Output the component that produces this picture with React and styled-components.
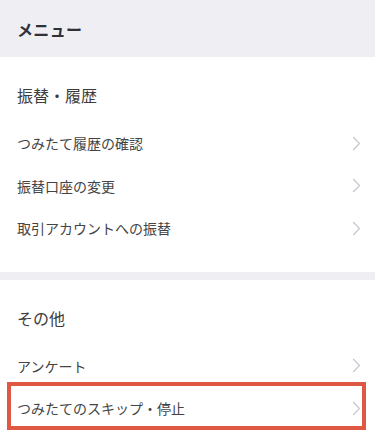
import styled, { createGlobalStyle } from "styled-components"

const GlobalStyle = createGlobalStyle`
    * {
        box-sizing: border-box;
    }

    body {
        margin: 0;
        background: #eeeef3;
        font-family: "Noto Sans CJK JP", "Noto Sans", sans-serif;
        color: #333;
    }
`

const ScHeader = styled.header`
    height: 57px;
    display: flex;
    align-items: center;
    padding: 0 17px;
    background: #eeeef3;
    font-size: 16px;
    font-weight: 700;
    color: #2f3038;
    letter-spacing: .02em;
`

const ScSection = styled.section`
    background: #fff;
    padding-bottom: ${p => p.$last ? "6px" : "22px"};
    margin-bottom: ${p => p.$last ? "0" : "8px"};
`

const ScTitle = styled.h2`
    margin: 0;
    padding: 28px 17px 17px;
    font-size: 16px;
    line-height: 20px;
    font-weight: 400;
    color: #3c3c3c;
`

const ScRow = styled.div`
    position: relative;
    height: 42.5px;
    display: flex;
    align-items: center;
    justify-content: space-between;
    padding: 0 14px 0 17px;
    font-size: 14px;
    color: #444;

    ${p => p.$marked && `
        height: 42px;

        &::after {
            content: "";
            position: absolute;
            left: 7px;
            right: 9px;
            top: -5px;
            bottom: -1px;
            border: 4.5px solid #de5843;
            pointer-events: none;
        }
    `}
`

const Chevron = () => (
    <svg width="9" height="15" viewBox="0 0 9 15" fill="none">
        <path d="M1.2 1l6.3 6.5L1.2 14" stroke="#c6c7d1" strokeWidth="1.2" />
    </svg>
)

const sections = [
    { title: "振替・履歴", items: ["つみたて履歴の確認", "振替口座の変更", "取引アカウントへの振替"] },
    { title: "その他", items: ["アンケート", "つみたてのスキップ・停止"] },
]

function App() {
    return (
        <>
            <GlobalStyle />
            <ScHeader>メニュー</ScHeader>
            {sections.map((section, i) =>
                <ScSection key={section.title} $last={i === sections.length - 1}>
                    <ScTitle>{section.title}</ScTitle>
                    {section.items.map(item =>
                        <ScRow key={item} $marked={item === "つみたてのスキップ・停止"}>
                            <span>{item}</span>
                            <Chevron />
                        </ScRow>,
                    )}
                </ScSection>,
            )}
        </>
    )
}

export default App
